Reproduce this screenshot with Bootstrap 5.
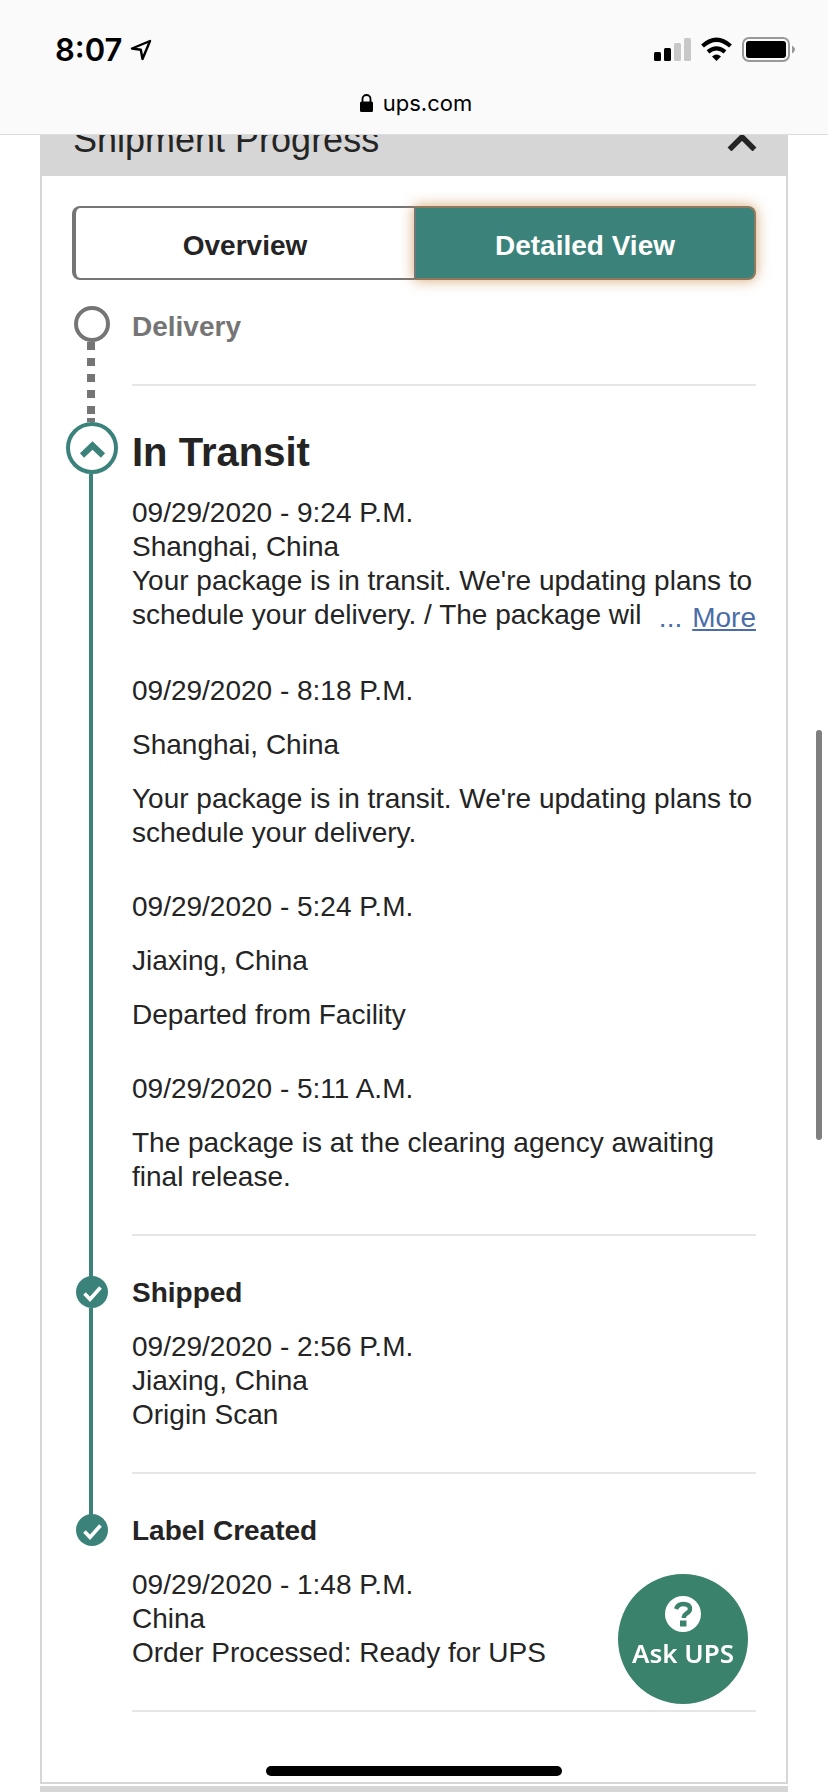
<!DOCTYPE html>
<html lang="en">
<head>
<meta charset="utf-8">
<meta name="viewport" content="width=device-width, initial-scale=1">
<title>Shipment Progress</title>
<link rel="stylesheet" href="https://cdn.jsdelivr.net/npm/bootstrap@5.3.0/dist/css/bootstrap.min.css">
<style>
  :root { --teal: #3b827b; --ink: #242424; --edge: #d6d6d6; --muted: #757575; }
  body { font: 28px/34px "Liberation Sans", Arial, sans-serif; color: var(--ink); background: #fff; }
  p { margin: 0 0 20px; }
  svg { display: block; flex: none; }

  .topbar { background: #fafafa; border-bottom: 1px solid #dcdcdc; padding-bottom: 16px; font-family: Inter, sans-serif; color: #000; }
  .status { padding: 30px 32px 18px 55px; line-height: 40px; }
  .clock { font-size: 31px; font-weight: 600; }
  .address { font-size: 22px; line-height: 30px; gap: 10px; padding-left: 4px; color: #000; }

  .panel { margin: -33px 40px 0; border: 2px solid var(--edge); }
  .panel-toggle { background: var(--edge); border: 0; padding: 14px 29px 14px 31px; font-size: 36px; line-height: 44px; color: var(--ink); }
  .panel-content { padding: 30px 30px 70px; }
  .next-panel { margin: 2px 40px 0; background: var(--edge); }

  .view-tab { flex: 1 1 0; padding: 21px 8px 15px; border: 2px solid var(--muted); background: #fff; font-weight: 700; color: var(--ink); }
  .view-tab:first-child { border-left-width: 4px; border-right: 0; border-radius: 8px 0 0 8px; }
  .view-tab:last-child { background: var(--teal); color: #fff; border-color: #92785c; border-left-color: var(--muted); border-radius: 0 8px 8px 0; box-shadow: 0 0 14px #c98a48c0; }

  .timeline { margin: 26px 0 0; }
  .rail { width: 38px; flex: none; }
  .rail-line { width: 4px; background: var(--teal); }
  .rail-dots { width: 8px; background: linear-gradient(to top, var(--muted) 4px, transparent 4px), repeating-linear-gradient(var(--muted) 0 8px, transparent 8px 16px); }
  .stage { margin: 0 0 39px 22px; padding: 1px 0 40px; border-bottom: 2px solid #e6e6e6; }
  .stage-title { font-size: 28px; line-height: 34px; font-weight: 700; margin: 0 0 20px; }
  .pending .stage { margin-bottom: 36px; padding-top: 4px; }
  .pending .stage-title { color: var(--muted); margin: 0; }
  .current .stage { padding-top: 6px; }
  .current .stage-title { font-size: 40px; line-height: 48px; }
  .timeline > li:last-child .stage { margin-bottom: 0; }
  .scan { margin-bottom: 40px; }
  .scan.latest { margin-bottom: 42px; }
  .scan > :last-child, .scan:last-child { margin-bottom: 0; }
  .more { gap: 10px; margin-top: 3px; color: #4a6da7; }
  .more a { color: inherit; }

  .ask { right: 80px; bottom: 88px; width: 130px; height: 130px; border: 0; border-radius: 50%; background: #3a826b; color: #fff; padding: 22px 0 0; font: 600 26px/42px "Noto Sans", sans-serif; }
  .home-bar { left: 50%; bottom: 16px; width: 296px; height: 10px; margin-left: -148px; border-radius: 5px; background: #000; }
  .scroll-thumb { right: 6px; top: 730px; width: 6px; height: 410px; border-radius: 3px; background: #7f7f7f; }
</style>
</head>
<body class="vh-100 overflow-hidden d-flex flex-column">

<header class="topbar">
  <div class="status d-flex align-items-center justify-content-between">
    <div class="d-flex align-items-center gap-2">
      <span class="clock">8:07</span>
      <svg width="22" height="22" viewBox="0 0 22 22" fill="none" stroke="#000" stroke-width="2.4" stroke-linejoin="round"><path d="M2 9.5 20 2 12.500 20 10.800 10.800Z"/></svg>
    </div>
    <div class="d-flex align-items-center">
      <svg width="142" height="26" viewBox="0 0 142 26">
        <rect x="0" y="15" width="7" height="9" rx="1.500"/><rect x="10" y="11" width="7" height="13" rx="1.500"/>
        <rect x="20" y="6" width="7" height="18" rx="1.500" fill="#c8c8c8"/><rect x="30" y="1" width="7" height="23" rx="1.500" fill="#c8c8c8"/>
        <path d="M62.500 24l-4.500-4.500q4.500-3.800 9 0z"/>
        <path d="M54 14.800q8.500-7 17 0M48.500 9q14-12.500 28 0" fill="none" stroke="#000" stroke-width="4.200"/>
        <rect x="89" y="1" width="46" height="23" rx="6" fill="none" stroke="#999" stroke-width="2"/>
        <rect x="92" y="4" width="40" height="17" rx="3"/><path d="M138 8.500q6 4 0 8z" fill="#999"/>
      </svg>
    </div>
  </div>
  <div class="address d-flex align-items-center justify-content-center">
    <svg width="13" height="18" viewBox="0 0 13 18"><rect y="7.500" width="13" height="10.500" rx="1.500"/><path d="M2.500 8.500V5a4 4 0 0 1 8 0v3.500" fill="none" stroke="#000" stroke-width="1.800"/></svg>
    <span>ups.com</span>
  </div>
</header>

<main class="flex-fill overflow-hidden d-flex flex-column">
  <section class="panel">
    <button type="button" class="panel-toggle w-100 d-flex align-items-center justify-content-between text-start" aria-expanded="true">
      <span>Shipment Progress</span>
      <svg width="30" height="22" viewBox="0 0 30 22" fill="none" stroke="#242424" stroke-width="5.500"><path d="M2.500 20.500 15 8 27.500 20.500"/></svg>
    </button>
    <div class="panel-content bg-white">
      <div class="d-flex" role="group" aria-label="View">
        <button type="button" class="view-tab">Overview</button>
        <button type="button" class="view-tab" aria-pressed="true">Detailed View</button>
      </div>

      <ol class="timeline list-unstyled">
        <li class="pending d-flex">
          <div class="rail d-flex flex-column align-items-center">
            <svg width="38" height="36" viewBox="0 0 38 36"><circle cx="20" cy="18" r="16" fill="#fff" stroke="#757575" stroke-width="4"/></svg>
            <span class="rail-dots flex-fill"></span>
          </div>
          <div class="stage flex-fill"><h2 class="stage-title">Delivery</h2></div>
        </li>
        <li class="current d-flex">
          <div class="rail d-flex flex-column align-items-center">
            <svg width="54" height="52" viewBox="0 0 54 52" fill="none" stroke="#3b827b"><circle cx="28" cy="26" r="24" fill="#fff" stroke-width="4"/><path d="M18 33.500 28.500 23.500 39 33.500" stroke-width="6"/></svg>
            <span class="rail-line flex-fill"></span>
          </div>
          <div class="stage flex-fill">
            <h2 class="stage-title">In Transit</h2>
            <div class="scan latest">
              <div>09/29/2020 - 9:24 P.M.</div>
              <div>Shanghai, China</div>
              <div>Your package is in transit. We're updating plans to schedule your delivery. / The package wil<span class="more float-end d-flex"><span>...</span><a href="#">More</a></span></div>
            </div>
            <div class="scan">
              <p>09/29/2020 - 8:18 P.M.</p>
              <p>Shanghai, China</p>
              <p>Your package is in transit. We're updating plans to schedule your delivery.</p>
            </div>
            <div class="scan">
              <p>09/29/2020 - 5:24 P.M.</p>
              <p>Jiaxing, China</p>
              <p>Departed from Facility</p>
            </div>
            <div class="scan">
              <p>09/29/2020 - 5:11 A.M.</p>
              <p>The package is at the clearing agency awaiting final release.</p>
            </div>
          </div>
        </li>
        <li class="d-flex">
          <div class="rail d-flex flex-column align-items-center">
            <svg width="34" height="33" viewBox="0 0 34 33"><path fill="#3b827b" d="M15 0h4v4h-4z"/><circle cx="18" cy="17" r="16" fill="#3b827b"/><path d="M10.500 18.500 16 24.300 26.500 12.500" fill="none" stroke="#fff" stroke-width="3.600"/></svg>
            <span class="rail-line flex-fill"></span>
          </div>
          <div class="stage flex-fill">
            <h2 class="stage-title">Shipped</h2>
            <div class="scan">
              <div>09/29/2020 - 2:56 P.M.</div>
              <div>Jiaxing, China</div>
              <div>Origin Scan</div>
            </div>
          </div>
        </li>
        <li class="d-flex">
          <div class="rail d-flex flex-column align-items-center">
            <svg width="34" height="33" viewBox="0 0 34 33"><path fill="#3b827b" d="M15 0h4v4h-4z"/><circle cx="18" cy="17" r="16" fill="#3b827b"/><path d="M10.500 18.500 16 24.300 26.500 12.500" fill="none" stroke="#fff" stroke-width="3.600"/></svg>
          </div>
          <div class="stage flex-fill">
            <h2 class="stage-title">Label Created</h2>
            <div class="scan">
              <div>09/29/2020 - 1:48 P.M.</div>
              <div>China</div>
              <div>Order Processed: Ready for UPS</div>
            </div>
          </div>
        </li>
      </ol>
    </div>
  </section>
  <section class="next-panel flex-fill"></section>
</main>

<button type="button" class="ask position-fixed d-flex flex-column align-items-center">
  <svg width="36" height="36" viewBox="0 0 36 36"><circle cx="18" cy="18" r="18" fill="#fff"/><path d="M11 13Q13 8 18 8q7 0 7 5 0 2.500-3.500 4.500-2.500 1.500-3 4.500" fill="none" stroke="#3a826b" stroke-width="4.400"/><path fill="#3a826b" d="M15 24.500h6.500v6H15z"/></svg>
  <span>Ask UPS</span>
</button>
<div class="scroll-thumb position-fixed"></div>
<div class="home-bar position-fixed"></div>

<script src="https://cdn.jsdelivr.net/npm/bootstrap@5.3.0/dist/js/bootstrap.bundle.min.js"></script>
</body>
</html>
